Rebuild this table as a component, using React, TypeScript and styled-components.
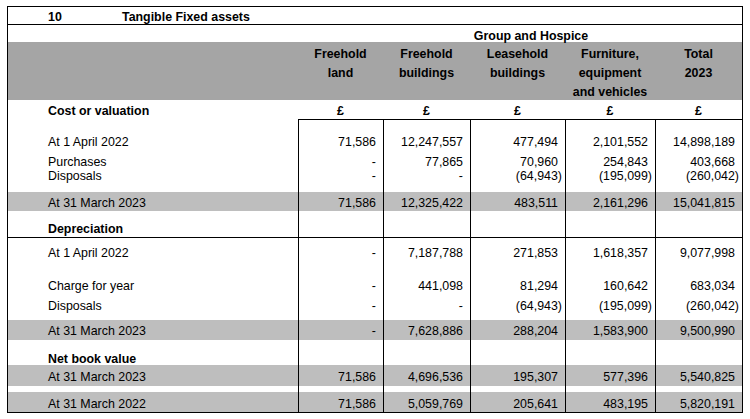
import styled, { createGlobalStyle } from 'styled-components';

const GlobalStyle = createGlobalStyle`
  body {
    margin: 0;
    background: #fff;
    font-family: "Liberation Sans", Arial, sans-serif;
    color: #000;
  }
`;

const COLS = '290px 85px 87px 95px 90px 87px';

const Page = styled.div`
  padding: 6px 0 0 7px;
`;

const Sheet = styled.div`
  width: 736px;
  box-sizing: border-box;
  border: 1px solid #000;
  font-size: 12.4px;
`;

const TitleRow = styled.div`
  display: flex;
  height: 18px;
  box-sizing: border-box;
  border-bottom: 1px solid #000;
  padding: 3px 0 0 40px;
  line-height: 14px;
  font-weight: bold;
  overflow: hidden;
`;

const TitleNo = styled.span`
  width: 74px;
`;

const GroupRow = styled.div`
  display: grid;
  grid-template-columns: ${COLS};
  height: 17px;
  padding-top: 4px;
  box-sizing: border-box;
  line-height: 14px;
  font-weight: bold;
`;

const GroupCell = styled.div`
  grid-column: 2 / 7;
  text-align: center;
  padding-left: 22px;
`;

const HeadRow = styled.div`
  display: grid;
  grid-template-columns: ${COLS};
  height: 58px;
  box-sizing: border-box;
  padding-top: 3px;
  background: #a5a5a5;
  line-height: 19px;
  font-weight: bold;
`;

const HeadCell = styled.div`
  text-align: center;
`;

const Row = styled.div<{ $h: number; $band?: boolean; $rule?: boolean }>`
  display: grid;
  grid-template-columns: ${COLS};
  grid-template-rows: 100%;
  height: ${({ $h }) => $h}px;
  box-sizing: border-box;
  line-height: 14px;
  background: ${({ $band }) => ($band ? '#bebebe' : 'transparent')};
  border-bottom: ${({ $rule }) => ($rule ? '1px solid #000' : 'none')};
`;

// text sits 1px lower than the row's nominal padding
const Label = styled.div<{ $pt: number; $bold?: boolean }>`
  padding: ${({ $pt }) => $pt + 1}px 0 0 40px;
  font-weight: ${({ $bold }) => ($bold ? 'bold' : 'normal')};
  white-space: nowrap;
`;

const Num = styled.div<{ $pt: number; $neg?: boolean }>`
  box-sizing: border-box;
  padding: ${({ $pt }) => $pt + 1}px ${({ $neg }) => ($neg ? 3 : 7)}px 0 0;
  text-align: right;
  border-left: 1px solid #000;
  white-space: nowrap;
`;

const UnitCell = styled.div`
  text-align: center;
  font-weight: bold;
  padding-top: 4px;
  border-bottom: 1px solid #000;
`;

type Line = {
  label?: string;
  vals?: string[];
  h: number;
  pt: number;
  band?: boolean;
  bold?: boolean;
  rule?: boolean;
};

const body: Line[] = [
  { label: 'At 1 April 2022', vals: ['71,586', '12,247,557', '477,494', '2,101,552', '14,898,189'], h: 33, pt: 14 },
  { label: 'Purchases', vals: ['-', '77,865', '70,960', '254,843', '403,668'], h: 15, pt: 1 },
  { label: 'Disposals', vals: ['-', '-', '(64,943)', '(195,099)', '(260,042)'], h: 24, pt: 0 },
  { label: 'At 31 March 2023', vals: ['71,586', '12,325,422', '483,511', '2,161,296', '15,041,815'], h: 19, pt: 3, band: true },
  { label: 'Depreciation', h: 27, pt: 10, bold: true, rule: true },
  { label: 'At 1 April 2022', vals: ['-', '7,187,788', '271,853', '1,618,357', '9,077,998'], h: 38, pt: 7 },
  { label: 'Charge for year', vals: ['-', '441,098', '81,294', '160,642', '683,034'], h: 19, pt: 2 },
  { label: 'Disposals', vals: ['-', '-', '(64,943)', '(195,099)', '(260,042)'], h: 25, pt: 3 },
  { label: 'At 31 March 2023', vals: ['-', '7,628,886', '288,204', '1,583,900', '9,500,990'], h: 20, pt: 3, band: true },
  { label: 'Net book value', h: 25, pt: 11, bold: true },
  { label: 'At 31 March 2023', vals: ['71,586', '4,696,536', '195,307', '577,396', '5,540,825'], h: 21, pt: 4, band: true },
  { h: 6, pt: 0 },
  { label: 'At 31 March 2022', vals: ['71,586', '5,059,769', '205,641', '483,195', '5,820,191'], h: 20, pt: 4, band: true },
];

const heads = [
  ['Freehold', 'land'],
  ['Freehold', 'buildings'],
  ['Leasehold', 'buildings'],
  ['Furniture,', 'equipment', 'and vehicles'],
  ['Total', '2023'],
];

export default function App() {
  return (
    <Page>
      <GlobalStyle />
      <Sheet>
        <TitleRow>
          <TitleNo>10</TitleNo>
          <span>Tangible Fixed assets</span>
        </TitleRow>
        <GroupRow>
          <GroupCell>Group and Hospice</GroupCell>
        </GroupRow>
        <HeadRow>
          <div />
          {heads.map((h, i) => (
            <HeadCell key={i}>
              {h.map((t, j) => (
                <div key={j}>{t}</div>
              ))}
            </HeadCell>
          ))}
        </HeadRow>
        <Row $h={20}>
          <Label $pt={3} $bold>Cost or valuation</Label>
          {heads.map((_, i) => (
            <UnitCell key={i}>£</UnitCell>
          ))}
        </Row>
        {body.map((r, i) => (
          <Row key={i} $h={r.h} $band={r.band} $rule={r.rule}>
            <Label $pt={r.pt} $bold={r.bold}>{r.label}</Label>
            {(r.vals ?? ['', '', '', '', '']).map((v, j) => (
              <Num key={j} $pt={r.pt} $neg={v.startsWith('(')}>{v}</Num>
            ))}
          </Row>
        ))}
      </Sheet>
    </Page>
  );
}
